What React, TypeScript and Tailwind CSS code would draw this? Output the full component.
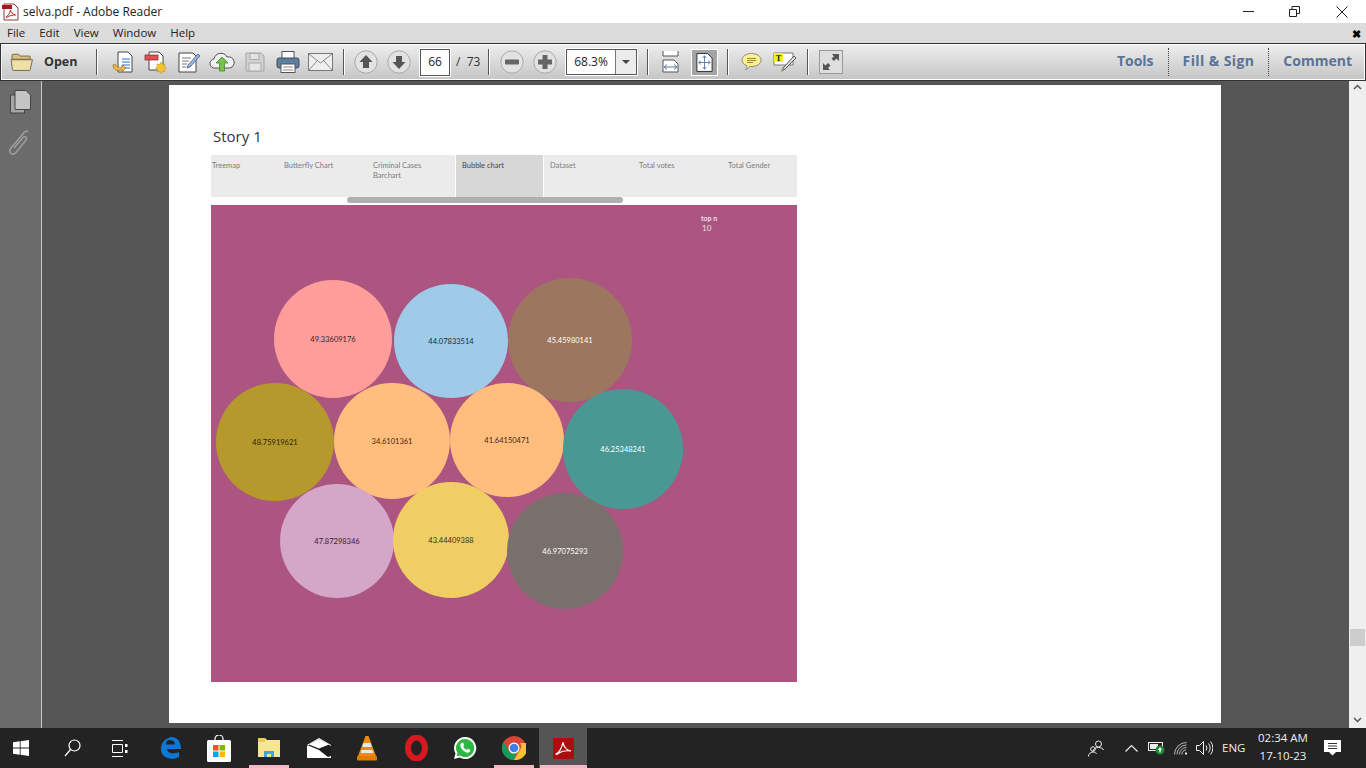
import { ReactNode } from "react";

const tabs = [
  { label: "Treemap", w: "w-[72px]", pad: "pl-[1px]" },
  { label: "Butterfly Chart", w: "w-[89px]", pad: "pl-[1px]" },
  { label: "Criminal Cases Barchart", w: "w-[83px]", pad: "pl-[1px] pr-[20px]" },
  { label: "Bubble chart", w: "w-[89px]", pad: "pl-[6px]", active: true },
  { label: "Dataset", w: "w-[89px]", pad: "pl-[6px]" },
  { label: "Total votes", w: "w-[89px]", pad: "pl-[6px]" },
  { label: "Total Gender", w: "w-[75px]", pad: "pl-[6px]" },
];

const bubbles = [
  { x: 122, y: 134, r: 59, bg: "bg-[#ff9d9a]", fg: "text-[#3a2526]", text: "49.33609176" },
  { x: 240, y: 136, r: 57, bg: "bg-[#a0cbe8]", fg: "text-[#1c2a38]", text: "44.07833514" },
  { x: 359, y: 135, r: 62, bg: "bg-[#9d7660]", fg: "text-white", text: "45.45980141" },
  { x: 64, y: 237, r: 59, bg: "bg-[#b6992d]", fg: "text-[#2a2408]", text: "48.75919621" },
  { x: 181, y: 236, r: 58, bg: "bg-[#ffbe7d]", fg: "text-[#3a2a14]", text: "34.6101361" },
  { x: 296, y: 235, r: 57, bg: "bg-[#ffbe7d]", fg: "text-[#3a2a14]", text: "41.64150471" },
  { x: 412, y: 244, r: 60, bg: "bg-[#499894]", fg: "text-white", text: "46.25348241" },
  { x: 126, y: 336, r: 57, bg: "bg-[#d4a6c8]", fg: "text-[#33202e]", text: "47.87298346" },
  { x: 240, y: 335, r: 58, bg: "bg-[#f1ce63]", fg: "text-[#3a3010]", text: "43.44409388" },
  { x: 354, y: 346, r: 58, bg: "bg-[#79706e]", fg: "text-white", text: "46.97075293" },
];

function Sep() {
  return <div className="w-[1px] h-[26px] bg-[#555] border-r border-white box-content" />;
}

function Slot({ children, w = "w-[33px]" }: { children: ReactNode; w?: string }) {
  return <div className={`${w} h-[26px] flex items-center justify-center shrink-0`}>{children}</div>;
}

function RoundBtn({ kind }: { kind: "up" | "down" | "minus" | "plus" }) {
  return (
    <svg width="24" height="24" viewBox="0 0 24 24">
      <circle cx="12" cy="12" r="11.200" fill="#e2e2e2" stroke="#a9a9a9" />
      {kind === "up" && <path d="M12 5l6.500 7H15v6H9v-6H5.500z" fill="#555" />}
      {kind === "down" && <path d="M12 19l6.500-7H15V6H9v6H5.500z" fill="#555" />}
      {kind === "minus" && <rect x="5" y="9.500" width="14" height="5" rx="1" fill="#666" />}
      {kind === "plus" && <path d="M9.500 5h5v4.500H19v5h-4.500V19h-5v-4.500H5v-5h4.500z" fill="#666" />}
    </svg>
  );
}

function Toolbar() {
  return (
    <div className="h-[38px] border border-[#333] bg-[#333] shrink-0">
      <div className="h-full border border-white border-l-[#f4f4f4] bg-gradient-to-b from-[#ededed] to-[#c6c6c6] flex items-center pl-[8px]">
        <svg width="24" height="20" viewBox="0 0 26 22" className="shrink-0">
          <path d="M2 5.500V3.500q0-1 1-1h6l2 2h10q1 0 1 1V8H2z" fill="#d9c07e" stroke="#6d6240" />
          <path d="M1 8.500h23.500l-2.500 11q-.2.800-1 .8H3.500q-.8 0-1-.8z" fill="#efdfa9" stroke="#6d6240" />
        </svg>
        <span className="ml-[10px] w-[52px] text-[12.500px] font-bold text-[#333]">Open</span>
        <Sep />
        <div className="ml-[8px] flex">
          <Slot>
            <svg width="24" height="24" viewBox="0 0 24 24">
              <path d="M7 2h10l4 4v16H7z" fill="#fff" stroke="#444" />
              <path d="M11 9h8M11 12h8M11 15h8M13 18h6" stroke="#2f6fc4" />
              <path d="M2 15c0 5 4 6 9 5l0 2 4-4-4-3v2c-3 1-6 0-7-3z" fill="#eeb74b" stroke="#9c6f1c" strokeWidth=".7" />
            </svg>
          </Slot>
          <Slot>
            <svg width="24" height="24" viewBox="0 0 24 24">
              <path d="M5 2h10l4 4v14H5z" fill="#fff" stroke="#444" />
              <rect x="1" y="5" width="13" height="5" fill="#e05050" stroke="#8c2020" strokeWidth=".7" />
              <path d="M17 12l1.500 2.500 2.500-.5-.5 2.500 2 1.500-2 1.500.5 2.500-2.500-.5-1.500 2-1.500-2-2.500.5.5-2.500-2-1.500 2-1.500-.5-2.500 2.500.5z" fill="#f1c232" stroke="#b48a1c" strokeWidth=".5" />
            </svg>
          </Slot>
          <Slot>
            <svg width="24" height="24" viewBox="0 0 24 24">
              <path d="M2 3h14l3 3v16H2z" fill="#fff" stroke="#444" />
              <path d="M5 8h9M5 11h7M5 14h5M5 17h4" stroke="#777" />
              <path d="M21 4l2 2-10 11-3 1 1-3z" fill="#9cb6dc" stroke="#3f5a85" strokeWidth=".8" />
            </svg>
          </Slot>
          <Slot>
            <svg width="26" height="22" viewBox="0 0 26 22">
              <path d="M6 17a4.500 4.500 0 0 1-1-9 7 7 0 0 1 13-2 5.500 5.500 0 0 1 3 11z" fill="#f2f2f2" stroke="#555" />
              <path d="M13 6l6 6h-3.500v8h-5v-8H7z" fill="#74c34a" stroke="#3f8a2a" strokeWidth=".8" />
            </svg>
          </Slot>
          <Slot>
            <svg width="22" height="22" viewBox="0 0 22 22">
              <path d="M2 2h15l3 3v15H2z" fill="#d2d2d2" stroke="#a5a5a5" />
              <rect x="6" y="2.500" width="9" height="6" fill="#e4e4e4" stroke="#aaa" />
              <rect x="5" y="12" width="12" height="8" fill="#e4e4e4" stroke="#aaa" />
            </svg>
          </Slot>
          <Slot>
            <svg width="24" height="24" viewBox="0 0 24 24">
              <rect x="6" y="1.500" width="12" height="7" fill="#fff" stroke="#555" />
              <rect x="1" y="8" width="22" height="10" rx="2" fill="#5f7f9f" stroke="#3d4f63" />
              <rect x="5" y="14" width="14" height="8.500" fill="#fff" stroke="#555" />
              <path d="M7 17h10M7 20h10" stroke="#888" />
            </svg>
          </Slot>
          <Slot>
            <svg width="25" height="18" viewBox="0 0 25 18">
              <rect x=".5" y=".5" width="24" height="17" fill="#efefef" stroke="#777" />
              <path d="M1 1l11.500 9L24 1M1 17l8-9M24 17l-8-9" fill="none" stroke="#888" />
            </svg>
          </Slot>
        </div>
        <div className="ml-[6px]"><Sep /></div>
        <div className="ml-[4px] flex">
          <Slot><RoundBtn kind="up" /></Slot>
          <Slot><RoundBtn kind="down" /></Slot>
        </div>
        <div className="ml-[5px] w-[30px] h-[27px] bg-white border border-[#555] outline outline-1 outline-white flex items-center justify-center text-[12px] text-[#222]">66</div>
        <span className="ml-[6px] w-[25px] text-[12px] text-[#333] whitespace-nowrap">/ &nbsp;73</span>
        <div className="ml-[7px]"><Sep /></div>
        <div className="ml-[5px] flex">
          <Slot><RoundBtn kind="minus" /></Slot>
          <Slot><RoundBtn kind="plus" /></Slot>
        </div>
        <div className="ml-[5px] w-[71px] h-[26px] bg-white border border-[#555] outline outline-1 outline-white flex">
          <div className="w-[48px] flex items-center justify-center text-[12px] text-[#222]">68.3%</div>
          <div className="flex-1 border-l border-[#777] bg-[#ececec] flex items-center justify-center">
            <div className="w-0 h-0 border-x-[4px] border-x-transparent border-t-[4px] border-t-[#444]" />
          </div>
        </div>
        <div className="ml-[10px]"><Sep /></div>
        <div className="ml-[5px] flex items-center">
          <Slot>
            <svg width="20" height="22" viewBox="0 0 20 22">
              <path d="M2 0v5h15V0" fill="#fff" stroke="#555" />
              <path d="M2 9h11l4 4v8H2z" fill="#fff" stroke="#555" />
              <path d="M3 16h13M3 16l3-2.500M3 16l3 2.500M16 16l-3-2.500M16 16l-3 2.500" stroke="#5b76ad" fill="none" />
            </svg>
          </Slot>
          <div className="ml-[4px] w-[27px] h-[27px] bg-[#a4a4a4] border border-white flex items-center justify-center">
            <svg width="17" height="19" viewBox="0 0 19 21">
              <path d="M1 .5h12l5 5v15H1z" fill="#fff" stroke="#222" />
              <path d="M9.500 3v15M3 10.500h13M9.500 3l-2 2.500M9.500 3l2 2.500M9.500 18l-2-2.500M9.500 18l2-2.500M3 10.500l2.500-2M3 10.500l2.500 2M16 10.500l-2.500-2M16 10.500l-2.500 2" stroke="#5b76ad" fill="none" />
            </svg>
          </div>
        </div>
        <div className="ml-[9px]"><Sep /></div>
        <div className="ml-[6px] flex">
          <Slot>
            <svg width="21" height="20" viewBox="0 0 21 20">
              <path d="M10.500 1.500c5 0 9.500 2.500 9.500 6.500s-4.500 6.500-9 6.500c-1 0-2 0-2.500-.2-.5 1.500-2 3-4 3.200 1-1 1.500-2.500 1.300-4C2.500 12.500 1 10.500 1 8c0-4 4.500-6.500 9.500-6.500z" fill="#fbf08f" stroke="#888" />
              <path d="M6 6.500h9M6 8.500h9M6 10.500h6" stroke="#9a8a30" />
            </svg>
          </Slot>
          <Slot>
            <svg width="24" height="22" viewBox="0 0 24 22">
              <path d="M1 2h19v12H1z" fill="#fff" stroke="#777" />
              <rect x="1" y="2" width="9" height="9" fill="#f4f01f" />
              <text x="5.500" y="9.500" textAnchor="middle" fontSize="8.500" fontWeight="bold" fontFamily="Liberation Serif, serif" fill="#222">T</text>
              <path d="M21 5l2 2-11 11-3 2 1-3z" fill="#dcdcdc" stroke="#555" />
              <path d="M10 18l-2 2 2-.5z" fill="#e4d22c" stroke="#a09020" strokeWidth=".5" />
            </svg>
          </Slot>
        </div>
        <div className="ml-[6px]"><Sep /></div>
        <div className="ml-[10px] w-[24px] h-[24px] bg-[#dedede] border border-[#9a9a9a] flex items-center justify-center">
          <svg width="20" height="20" viewBox="0 0 20 20">
            <path d="M11 2h7v7l-2.500-2.500-2.500 2.500-2.500-2.500L13 4.500zM9 18H2v-7l2.500 2.500L7 11l2.500 2.500L7 16z" fill="#555" />
          </svg>
        </div>
        <div className="ml-auto flex items-center h-full text-[14px] font-bold text-[#5a7396] pb-[3px]">
          <span>Tools</span>
          <div className="w-0 h-[28px] mt-[3px] border-l border-dotted border-[#444] mx-[14px]" />
          <span className="tracking-[0.4px]">Fill &amp; Sign</span>
          <div className="w-0 h-[28px] mt-[3px] border-l border-dotted border-[#444] mx-[14px]" />
          <span className="mr-[12px]">Comment</span>
        </div>
      </div>
    </div>
  );
}

function Story() {
  return (
    <div className="w-[1052px] h-[638px] bg-white shrink-0 pl-[42px] pt-[41px]">
      <div className="text-[15px] leading-[20px] text-[#333] pl-[2px] h-[29px]">Story 1</div>
      <div className="w-[586px] h-[42px] bg-[#ebebeb] flex text-[7.500px] leading-[10px] text-[#7d7d7d] font-['Lato',sans-serif]">
        {tabs.map((t) => (
          <div
            key={t.label}
            className={`${t.w} ${t.pad} pt-[6px] ${t.active ? "bg-[#d7d7d7] text-[#444] border-x border-white" : ""}`}
          >
            {t.label}
          </div>
        ))}
      </div>
      <div className="w-[586px] h-[8px] flex">
        <div className="ml-[136px] w-[276px] h-[6px] rounded-full bg-[#b0b0b0]" />
      </div>
      <div className="relative w-[586px] h-[477px] bg-[#ab5580] overflow-hidden font-['Lato',sans-serif]">
        <div className="absolute left-[490px] top-[8px] text-[7px] font-bold leading-[10px] text-[#f2dfe9]">top n</div>
        <div className="absolute left-[491px] top-[18px] text-[8px] leading-[11px] text-[#f2dfe9]">10</div>
        {bubbles.map((b) => (
          <div
            key={b.text}
            className={`absolute rounded-full flex items-center justify-center pt-[2px] text-[7.500px] ${b.bg} ${b.fg}`}
            style={{ left: b.x - b.r, top: b.y - b.r, width: b.r * 2, height: b.r * 2 }}
          >
            {b.text}
          </div>
        ))}
      </div>
    </div>
  );
}

function Taskbar() {
  const slot = "h-full flex items-center justify-center shrink-0";
  return (
    <div className="h-[40px] shrink-0 bg-[#232323] flex items-center text-white">
      <div className={`${slot} w-[48px] pr-[6px]`}>
        <svg width="16" height="16" viewBox="0 0 16 16" fill="#fff">
          <path d="M0 2.300l6.800-1v6.300H0zM7.600 1.200L16 0v7.600H7.600zM0 8.400h6.800v6.300l-6.800-1zM7.600 8.400H16V16l-8.400-1.200z" />
        </svg>
      </div>
      <div className={`${slot} w-[48px]`}>
        <svg width="17" height="18" viewBox="0 0 17 18" fill="none" stroke="#fff" strokeWidth="1.200">
          <circle cx="10.500" cy="6.500" r="5.500" />
          <path d="M6.500 10.500L1 17" />
        </svg>
      </div>
      <div className={`${slot} w-[48px]`}>
        <svg width="16" height="17" viewBox="0 0 16 17" fill="none" stroke="#fff">
          <path d="M0 .5h11M0 16.500h11M.5 4.500h10v8H.5z" />
          <rect x="13" y="4" width="2.500" height="3" fill="#fff" stroke="none" />
          <rect x="13" y="10" width="2.500" height="3" fill="#fff" stroke="none" />
        </svg>
      </div>
      <div className={`${slot} w-[53px]`}>
        <svg width="20" height="22" viewBox="0 0 20 22">
          <path d="M10 0c6 0 10 4 10 12H6c.3 4 5 6 12 3v5c-8 4-18 1-18-8C0 7 3 2 8 1 6 3 5 5 5 7.500h9C14 5 12.500 3.500 9 3c-1 0-2 .3-3 .8C7 1 8.500 0 10 0z" fill="#0a78d7" />
        </svg>
      </div>
      <div className={`${slot} w-[44px]`}>
        <svg width="24" height="27" viewBox="0 0 24 27">
          <path d="M8 6V4a4 4 0 0 1 8 0v2" fill="none" stroke="#fff" strokeWidth="1.200" />
          <rect y="5" width="24" height="22" rx="1.500" fill="#fff" />
          <rect x="6" y="10" width="5.500" height="5.500" fill="#f25022" />
          <rect x="12.500" y="10" width="5.500" height="5.500" fill="#7fba00" />
          <rect x="6" y="16.500" width="5.500" height="5.500" fill="#00a4ef" />
          <rect x="12.500" y="16.500" width="5.500" height="5.500" fill="#ffb900" />
        </svg>
      </div>
      <div className={`${slot} w-[56px]`}>
        <svg width="22" height="22" viewBox="0 0 22 22">
          <path d="M0 2q0-1 1-1h6l2 2h13v17H0z" fill="#f7e58f" />
          <path d="M0 1h7v4H0z" fill="#e8c95a" />
          <path d="M6 20v-6h10v6h-3v-3H9v3z" fill="#3aa8e0" />
        </svg>
      </div>
      <div className={`${slot} w-[44px]`}>
        <svg width="24" height="20" viewBox="0 0 24 20">
          <path d="M12 0l12 7v13H0V7z" fill="#fff" />
          <path d="M0 7l12 5 9 7 3-1V8L12 1 0 8z" fill="#1d1d1d" />
          <path d="M12 1l10 5.500-10 4-10-4z" fill="#fff" />
        </svg>
      </div>
      <div className={`${slot} w-[52px]`}>
        <svg width="20" height="25" viewBox="0 0 20 25">
          <path d="M8.500 0h3L19 20H1z" fill="#f08a0c" />
          <path d="M6.500 7h7l1.200 4H5.300zM4.700 14h10.600l1 3H3.700z" fill="#e8e8e8" />
          <rect y="20" width="20" height="4.500" rx="1" fill="#e57a00" />
        </svg>
      </div>
      <div className={`${slot} w-[46px]`}>
        <svg width="23" height="26" viewBox="0 0 23 26">
          <ellipse cx="11.500" cy="13" rx="8.500" ry="10.500" fill="none" stroke="#d9171e" strokeWidth="6" />
        </svg>
      </div>
      <div className={`${slot} w-[52px]`}>
        <svg width="24" height="24" viewBox="0 0 24 24">
          <path d="M12 1a11 11 0 0 0-9.500 16.500L1 23l5.700-1.500A11 11 0 1 0 12 1z" fill="#fff" />
          <path d="M12 3a9 9 0 0 0-7.500 14l-.8 3.300 3.400-.9A9 9 0 1 0 12 3z" fill="#2cb742" />
          <path d="M8.500 7c-1 .5-1.500 2-1 3.500 1 2.800 3.200 5 6 6 1.500.5 3 0 3.500-1l.3-1.500-2.500-1.300-1 1.200c-1.500-.5-3-2-3.600-3.600l1.100-1-1.200-2.700z" fill="#fff" />
        </svg>
      </div>
      <div className={`${slot} w-[46px]`}>
        <svg width="24" height="24" viewBox="0 0 24 24">
          <circle cx="12" cy="12" r="12" fill="#db4437" />
          <path d="M12 24a12 12 0 0 1-10.400-18L7 15a5.500 5.500 0 0 0 7 2.500z" fill="#0f9d58" />
          <path d="M12 24l5.500-9.500A6 6 0 0 0 18 7h6a12 12 0 0 1-12 17z" fill="#fbc02d" />
          <circle cx="12" cy="12" r="5.500" fill="#fff" />
          <circle cx="12" cy="12" r="4.300" fill="#3f80e8" />
        </svg>
      </div>
      <div className={`${slot} ml-[2px] w-[48px] bg-[#555]`}>
        <svg width="21" height="21" viewBox="0 0 21 21">
          <rect width="21" height="21" fill="#ad0d0d" />
          <path d="M3 16c3-1 6-6 7-12 .5 4 3 8 8 9-4-.5-9 0-12 2-1 .7-3 2-3 1z" fill="none" stroke="#fff" strokeWidth="1.200" />
        </svg>
      </div>
      <div className="ml-auto flex items-center h-full">
        <svg width="16" height="17" viewBox="0 0 16 17" fill="none" stroke="#eee" className="mr-[21px]">
          <circle cx="10.500" cy="4" r="3" />
          <path d="M5 11c.5-2.500 3-3.500 5.500-3.500S15 8.500 15.500 10" />
          <circle cx="5" cy="9" r="2.300" />
          <path d="M.5 16.500c0-2.500 2-4.500 4.500-4.500s3 1 3.500 2" />
        </svg>
        <svg width="13" height="8" viewBox="0 0 13 8" fill="none" stroke="#eee" strokeWidth="1.200" className="mr-[10px]">
          <path d="M.5 7.500l6-6 6 6" />
        </svg>
        <svg width="17" height="14" viewBox="0 0 17 14" className="mr-[9px]">
          <rect x=".5" y="1.500" width="14" height="8" fill="none" stroke="#eee" />
          <rect x="2" y="3" width="8" height="5" fill="#eee" />
          <circle cx="12" cy="9" r="4.500" fill="#1a8a32" />
          <path d="M12 6l2 3h-1.300v2.500h-1.400V9H10z" fill="#fff" />
        </svg>
        <svg width="14" height="13" viewBox="0 0 14 13" fill="none" stroke="#bbb" className="mr-[8px]">
          <path d="M.5 12.500a12 12 0 0 1 12-12M3 12.500a9.500 9.500 0 0 1 9.500-9.500M5.500 12.500a7 7 0 0 1 7-7M8 12.500a4.500 4.500 0 0 1 4-4.500" />
          <rect x="11" y="10.500" width="2" height="2" fill="#eee" stroke="none" />
        </svg>
        <svg width="17" height="14" viewBox="0 0 17 14" fill="none" stroke="#eee" className="mr-[9px]">
          <path d="M.5 4.500h3l4-4v13l-4-4h-3z" />
          <path d="M10 4.500a4 4 0 0 1 0 5M12.500 2.500a7 7 0 0 1 0 9M14.500 .5a10 10 0 0 1 0 13" />
        </svg>
        <span className="text-[11.500px] w-[24px] text-[#eee]">ENG</span>
        <div className="ml-[6px] w-[62px] pb-[2px] text-center text-[11.500px] leading-[18px] text-[#eee]">
          <div>02:34 AM</div>
          <div>17-10-23</div>
        </div>
        <svg width="17" height="16" viewBox="0 0 17 16" className="ml-[10px] mr-[25px]">
          <path d="M0 0h17v12h-5l-3.500 3.500L5 12H0z" fill="#fff" />
          <path d="M4 3.500h9M4 6h9M4 8.500h9" stroke="#333" />
        </svg>
      </div>
    </div>
  );
}

export default function App() {
  return (
    <div className="relative w-[1366px] h-[768px] overflow-hidden flex flex-col bg-white font-['Open_Sans',sans-serif]">
      <div className="h-[23px] shrink-0 bg-white flex items-center">
        <svg width="18" height="18" viewBox="0 0 18 18" className="ml-[2px] shrink-0">
          <path d="M2 1h10l4 4v12H2z" fill="#fff" stroke="#8a3a3a" />
          <rect y="2" width="10" height="4" fill="#a81818" />
          <path d="M4 14c2-1 4-4 4.500-7 .5 2.500 2 4 5 5-3 0-6 .5-8 2-.7.500-1.500 1-1.500 0z" fill="none" stroke="#c02020" />
        </svg>
        <span className="ml-[3px] text-[12px] text-[#222]">selva.pdf - Adobe Reader</span>
        <div className="ml-auto flex items-center">
          <div className="w-[11px] h-[1px] bg-[#222] mr-[35px]" />
          <svg width="11" height="11" viewBox="0 0 11 11" fill="none" stroke="#222" className="mr-[36px]">
            <path d="M.5 3.500h7v7h-7zM3 3.500V.5h7.500v7H7.500" />
          </svg>
          <svg width="12" height="12" viewBox="0 0 12 12" fill="none" stroke="#222" className="mr-[18px]">
            <path d="M.5.5l11 11M11.500.5l-11 11" />
          </svg>
        </div>
      </div>
      <div className="h-[20px] shrink-0 bg-[#dcdcdc] flex items-center pl-[7px] gap-[14px] text-[11.500px] text-[#222]">
        <span>File</span>
        <span>Edit</span>
        <span>View</span>
        <span>Window</span>
        <span>Help</span>
        <span className="ml-auto mr-[5px] text-[11px] font-bold leading-none text-black">✖</span>
      </div>
      <Toolbar />
      <div className="h-[647px] flex shrink-0 bg-[#565656]">
        <div className="w-[41px] bg-[#6b6b6b] flex flex-col items-center pt-[9px] gap-[16px] shrink-0">
          <svg width="22" height="24" viewBox="0 0 22 24">
            <rect x=".5" y="5" width="14" height="18" fill="#a6a6a6" stroke="#444" />
            <path d="M5 .5h11l4.500 4.500v14.500H5z" fill="#c4c4c4" stroke="#444" />
          </svg>
          <svg width="22" height="26" viewBox="0 0 22 26" fill="none" stroke="#a0a0a0" strokeWidth="1.500" className="-ml-[4px]">
            <path d="M20 2c-1-1.200-2.500-1-3.500 0L3 18c-2 2.500-1.500 4.500 0 5.500s3.500.5 5-1L18 10c1-1.500.5-2.500-.3-3s-2-.3-3 .8L6 18" />
          </svg>
        </div>
        <div className="w-[1px] bg-[#c8c8c8] shrink-0" />
        <div className="flex-1 flex justify-start pl-[127px] pt-[4px]">
          <Story />
        </div>
        <div className="w-[17px] h-full bg-[#efefef] flex flex-col items-center shrink-0 py-[3px]">
          <svg width="9" height="6" viewBox="0 0 9 6" fill="none" stroke="#555" strokeWidth="1.500">
            <path d="M1 5l3.500-3.500L8 5" />
          </svg>
          <div className="mt-[539px] w-[15px] h-[17px] bg-[#cdcdcd]" />
          <svg width="9" height="6" viewBox="0 0 9 6" fill="none" stroke="#555" strokeWidth="1.500" className="mt-auto mb-[2px]">
            <path d="M1 1l3.500 3.500L8 1" />
          </svg>
        </div>
      </div>
      <Taskbar />
      <div className="absolute left-[249px] top-[765px] w-[40px] h-[3px] bg-[#f4b6c2]" />
      <div className="absolute left-[494px] top-[765px] w-[40px] h-[3px] bg-[#f4b6c2]" />
      <div className="absolute left-[540px] top-[765px] w-[47px] h-[3px] bg-[#f4b6c2]" />
    </div>
  );
}
